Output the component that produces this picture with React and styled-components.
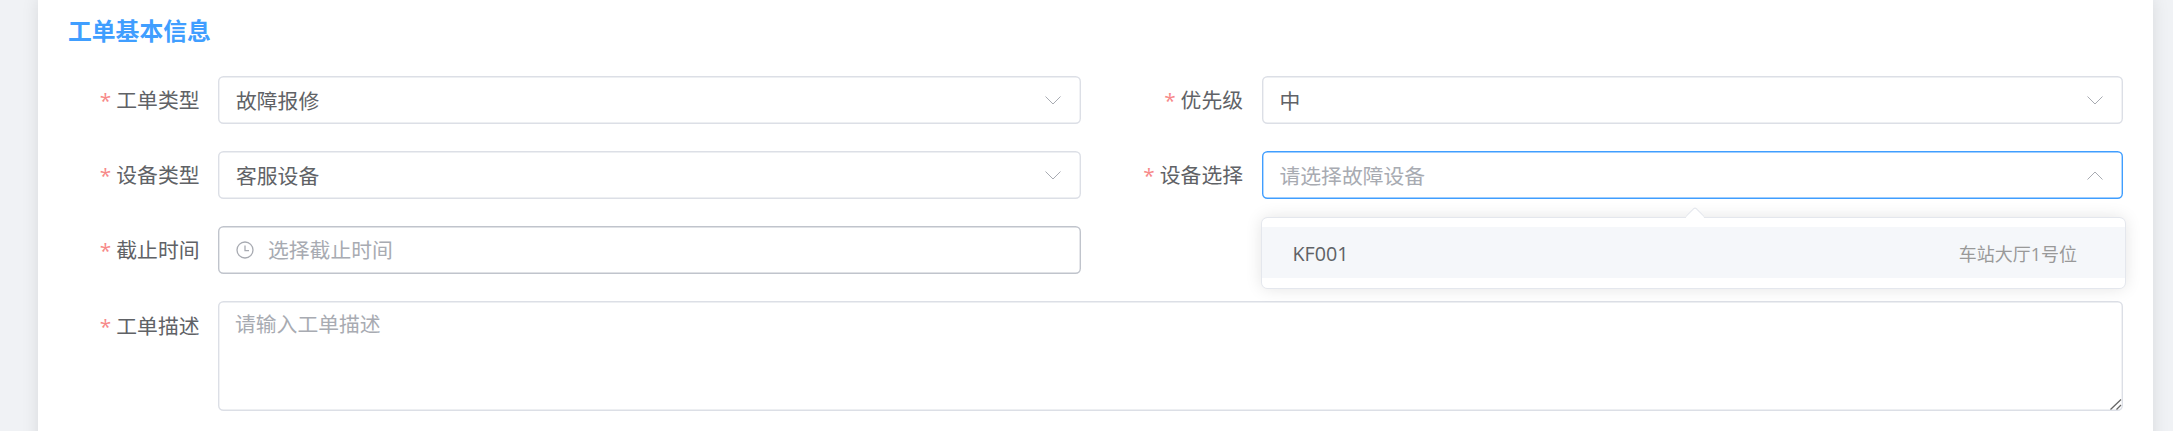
import React from 'react';
import styled, { createGlobalStyle } from 'styled-components';

const GlobalStyle = createGlobalStyle`
  html, body {
    margin: 0;
    padding: 0;
    height: 431px;
    overflow: hidden;
    background: #f0f2f5;
  }
  * {
    box-sizing: border-box;
  }
`;

const Page = styled.div`
  height: 431px;
  overflow: hidden;
  padding: 0 20px 0 38px;
  font-family: 'Open Sans', 'Noto Sans CJK SC', sans-serif;
`;

const Card = styled.section`
  height: 460px;
  margin-top: -6px;
  padding: 21px 30px 0 30px;
  background: #fff;
  border-radius: 6px;
  box-shadow: 0 3px 17px rgba(0, 0, 0, 0.1);
`;

const Title = styled.h2`
  margin: 0 0 29px;
  font-size: 23.8px;
  line-height: 32px;
  font-weight: 700;
  color: #409eff;
`;

const Form = styled.form`
  display: grid;
  grid-template-columns: 1013px 1011.5px;
  column-gap: 30.5px;
  row-gap: 27px;
`;

const Field = styled.div`
  display: flex;
  min-width: 0;
  position: relative;
  grid-column: ${(p) => (p.$wide ? '1 / -1' : 'auto')};
`;

const Label = styled.label`
  flex: 0 0 150px;
  padding-right: 18.5px;
  display: flex;
  justify-content: flex-end;
  align-items: flex-start;
  height: 48px;
  line-height: ${(p) => (p.$top ? '50px' : '48px')};
  font-size: 20.8px;
  color: #606266;
`;

const Star = styled.span`
  color: #f78989;
  margin-right: 5px;
`;

const Control = styled.div`
  flex: 1;
  height: 48px;
  display: flex;
  align-items: center;
  gap: 14px;
  padding: 0 20px 0 18px;
  border-radius: 5.5px;
  background: #fff;
  box-shadow: inset 0 0 0 1.4px ${(p) => p.$border || '#dcdfe6'};
  font-size: 20.8px;
  color: #606266;
`;

const Value = styled.span`
  flex: 1;
  color: ${(p) => (p.$placeholder ? '#a8abb2' : '#606266')};
`;

const TimeInput = styled.input`
  flex: 1;
  min-width: 0;
  border: 0;
  outline: 0;
  padding: 0;
  background: transparent;
  font: inherit;
  color: #606266;
  &::placeholder {
    color: #a8abb2;
    opacity: 1;
  }
`;

const DescriptionInput = styled.textarea`
  flex: 1;
  display: block;
  height: 110px;
  padding: 8px 17px;
  border: 0;
  outline: 0;
  border-radius: 5.5px;
  box-shadow: inset 0 0 0 1.4px #dcdfe6;
  resize: none;
  font-family: inherit;
  font-size: 20.8px;
  line-height: 30px;
  color: #606266;
  &::placeholder {
    color: #a8abb2;
    opacity: 1;
  }
`;

const Grip = styled.svg`
  position: absolute;
  right: 1px;
  bottom: 1px;
`;

const Dropdown = styled.div`
  position: absolute;
  z-index: 5;
  top: 67px;
  left: 150px;
  right: -2px;
  height: 70px;
  padding: 9px 0;
  background: #fff;
  border-radius: 5.5px;
  box-shadow: 0 0 0 1px #e4e7ed, 0 0 17px rgba(0, 0, 0, 0.12);
`;

const Arrow = styled.span`
  position: absolute;
  top: -7px;
  right: 423px;
  width: 14px;
  height: 14px;
  background: #fff;
  transform: rotate(45deg);
  border-radius: 2px;
  box-shadow: -1px -1px 0 #e4e7ed;
`;

const Option = styled.div`
  position: relative;
  height: 51px;
  display: flex;
  justify-content: space-between;
  align-items: center;
  padding: 1px 48px 0 31px;
  background: #f5f7fa;
  font-size: 19.7px;
  color: #606266;
`;

const OptionHint = styled.span`
  font-size: 18px;
  color: #999;
`;

const Chevron = ({ up }) => (
  <svg width="16" height="9" viewBox="0 0 16 9" fill="none" aria-hidden="true">
    <path
      d={up ? 'M.5 8.5L8 1L15.5 8.5' : 'M.5 .5L8 8L15.5 .5'}
      stroke="#a8abb2"
      strokeWidth="1"
    />
  </svg>
);

const ClockIcon = () => (
  <svg width="18" height="18" viewBox="0 0 18 18" fill="none" aria-hidden="true">
    <circle cx="9" cy="9" r="8" stroke="#a8abb2" strokeWidth="1.3" />
    <path d="M9 4.5V9.6H13" stroke="#a8abb2" strokeWidth="1.3" />
  </svg>
);

const FieldLabel = ({ top, children }) => (
  <Label $top={top}>
    <Star>*</Star>
    {children}
  </Label>
);

const App = () => (
  <>
    <GlobalStyle />
    <Page>
      <Card>
        <Title>工单基本信息</Title>
        <Form>
          <Field>
            <FieldLabel>工单类型</FieldLabel>
            <Control>
              <Value>故障报修</Value>
              <Chevron />
            </Control>
          </Field>
          <Field>
            <FieldLabel>优先级</FieldLabel>
            <Control>
              <Value>中</Value>
              <Chevron />
            </Control>
          </Field>
          <Field>
            <FieldLabel>设备类型</FieldLabel>
            <Control>
              <Value>客服设备</Value>
              <Chevron />
            </Control>
          </Field>
          <Field>
            <FieldLabel>设备选择</FieldLabel>
            <Control $border="#409eff">
              <Value $placeholder>请选择故障设备</Value>
              <Chevron up />
            </Control>
            <Dropdown>
              <Arrow />
              <Option>
                <span>KF001</span>
                <OptionHint>车站大厅1号位</OptionHint>
              </Option>
            </Dropdown>
          </Field>
          <Field>
            <FieldLabel>截止时间</FieldLabel>
            <Control $border="#c0c4cc">
              <ClockIcon />
              <TimeInput placeholder="选择截止时间" readOnly />
            </Control>
          </Field>
          <div />
          <Field $wide>
            <FieldLabel top>工单描述</FieldLabel>
            <DescriptionInput placeholder="请输入工单描述" readOnly />
            <Grip width="12" height="11" viewBox="0 0 12 11" fill="none" aria-hidden="true">
              <path d="M.5 10.5L11 .5M6.5 10.5L11 6" stroke="#666" strokeWidth="1.3" />
            </Grip>
          </Field>
        </Form>
      </Card>
    </Page>
  </>
);

export default App;
